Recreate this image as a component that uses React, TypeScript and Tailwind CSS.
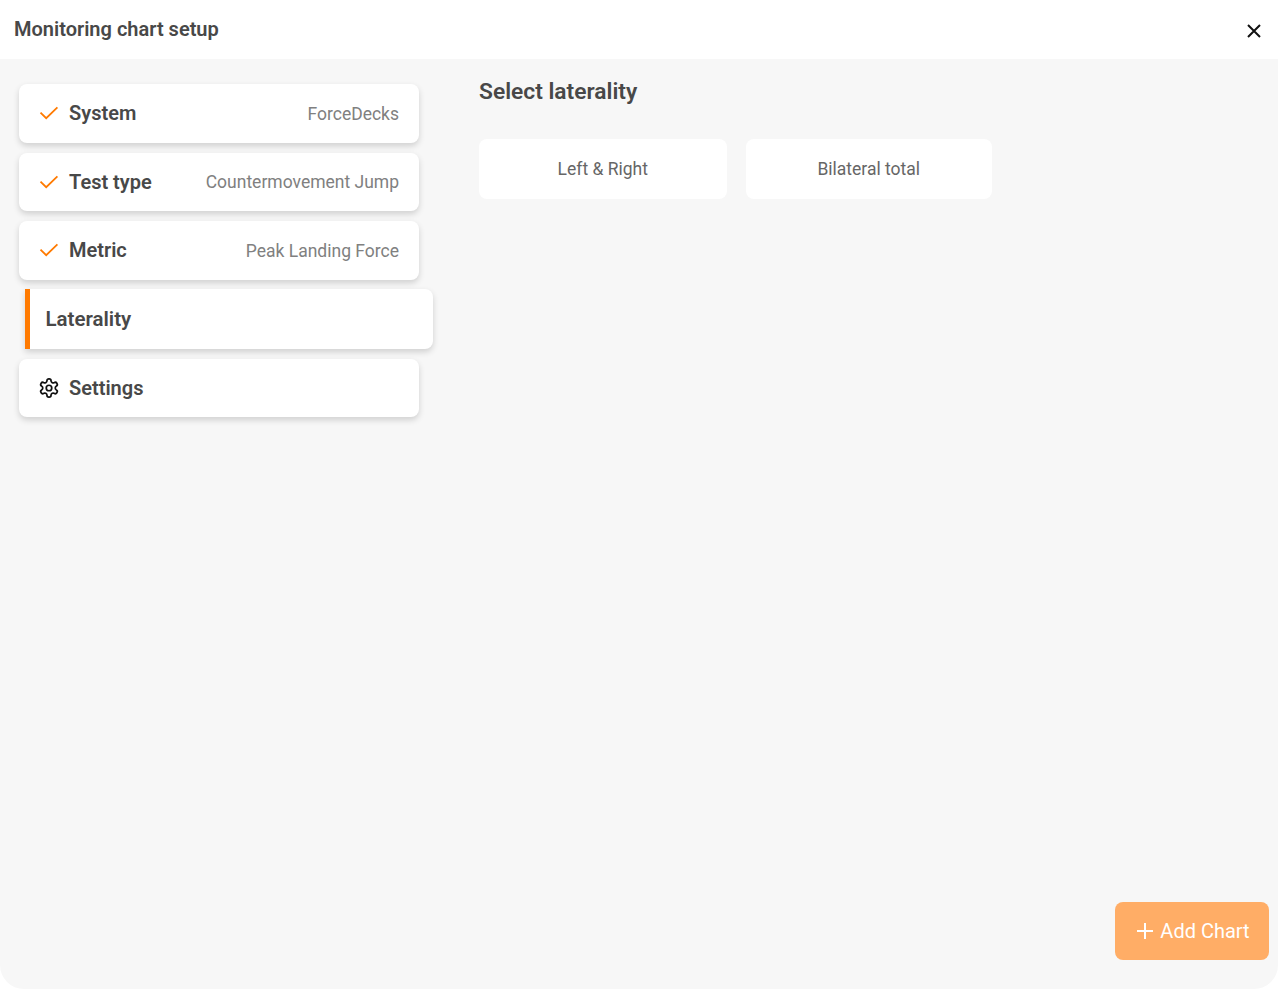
import React from "react";

function Check() {
  return (
    <svg width="20" height="20" viewBox="0 0 20 20" fill="none" className="shrink-0 text-[#ff7a00]">
      <path d="M1.5 9.6 L7.2 15.2 L18.4 4.4" stroke="currentColor" strokeWidth="1.8" />
    </svg>
  );
}

function Gear() {
  return (
    <svg width="22" height="22" viewBox="0 0 24 24" fill="none" stroke="#111" strokeWidth="1.9" strokeLinecap="round" strokeLinejoin="round" className="shrink-0 -mx-px">
      <path d="M12.22 2h-.44a2 2 0 0 0-2 2v.18a2 2 0 0 1-1 1.73l-.43.25a2 2 0 0 1-2 0l-.15-.08a2 2 0 0 0-2.73.73l-.22.38a2 2 0 0 0 .73 2.73l.15.1a2 2 0 0 1 1 1.72v.51a2 2 0 0 1-1 1.74l-.15.09a2 2 0 0 0-.73 2.73l.22.38a2 2 0 0 0 2.73.73l.15-.08a2 2 0 0 1 2 0l.43.25a2 2 0 0 1 1 1.73V20a2 2 0 0 0 2 2h.44a2 2 0 0 0 2-2v-.18a2 2 0 0 1 1-1.73l.43-.25a2 2 0 0 1 2 0l.15.08a2 2 0 0 0 2.73-.73l.22-.39a2 2 0 0 0-.73-2.73l-.15-.08a2 2 0 0 1-1-1.74v-.5a2 2 0 0 1 1-1.74l.15-.09a2 2 0 0 0 .73-2.73l-.22-.38a2 2 0 0 0-2.73-.73l-.15.08a2 2 0 0 1-2 0l-.43-.25a2 2 0 0 1-1-1.73V4a2 2 0 0 0-2-2z" />
      <circle cx="12" cy="12" r="3" />
    </svg>
  );
}

function Row({ icon, label, value }: { icon: React.ReactNode; label: string; value?: string }) {
  return (
    <div className="flex h-[58.5px] w-[400px] items-center rounded-lg bg-white px-5 shadow-[0_3px_6px_rgba(0,0,0,0.16)]">
      {icon}
      <span className="ml-2.5 text-[20px] font-semibold text-[#484848]">{label}</span>
      {value && <span className="ml-auto pt-px text-[17.5px] text-[#808080]">{value}</span>}
    </div>
  );
}

export default function App() {
  return (
    <div className="flex h-[989px] w-[1278px] flex-col bg-white font-['Roboto',sans-serif] overflow-hidden">
      <header className="flex h-[59px] shrink-0 items-center justify-between pb-0.5 pl-3.5 pr-[17px]">
        <h1 className="text-[20px] font-semibold text-[#484848]">Monitoring chart setup</h1>
        <svg width="14" height="14" viewBox="0 0 14 14" fill="none" stroke="#111" strokeWidth="2" className="mt-1">
          <path d="M1 1 L13 13 M13 1 L1 13" />
        </svg>
      </header>
      <main className="flex min-h-0 flex-1 flex-col rounded-b-3xl bg-[#f7f7f7]">
        <div className="flex flex-1">
          <nav className="flex w-[479px] shrink-0 flex-col gap-2.5 pl-[19px] pt-[25.2px]">
            <Row icon={<Check />} label="System" value="ForceDecks" />
            <Row icon={<Check />} label="Test type" value="Countermovement Jump" />
            <Row icon={<Check />} label="Metric" value="Peak Landing Force" />
            <div className="-mt-[0.5px] ml-1.5 flex h-[59.6px] w-[408px] items-center rounded-r-lg border-l-[5px] border-[#ff7a00] bg-white pl-[15.5px] shadow-[0_3px_6px_rgba(0,0,0,0.16)]">
              <span className="text-[20.5px] font-semibold text-[#484848]">Laterality</span>
            </div>
            <Row icon={<Gear />} label="Settings" />
          </nav>
          <section className="pt-[18px]">
            <h2 className="text-[22.75px] leading-[30px] font-semibold text-[#484848]">Select laterality</h2>
            <div className="mt-[32px] flex gap-[19px]">
              <button className="h-[60px] w-[247.5px] rounded-lg bg-white pt-px text-[17.5px] text-[#666666]">Left &amp; Right</button>
              <button className="h-[60px] w-[246.5px] rounded-lg bg-white pt-px text-[17.5px] text-[#666666]">Bilateral total</button>
            </div>
          </section>
        </div>
        <div className="flex justify-end pb-[29px] pr-[9px]">
          <button className="flex h-[58px] w-[154px] items-center justify-center gap-1.5 rounded-lg bg-[#ffad66] pl-0.5 text-[20px] text-white">
            <svg width="18" height="18" viewBox="0 0 18 18" fill="none" stroke="white" strokeWidth="2">
              <path d="M9 1 V17 M1 9 H17" />
            </svg>
            Add Chart
          </button>
        </div>
      </main>
    </div>
  );
}
